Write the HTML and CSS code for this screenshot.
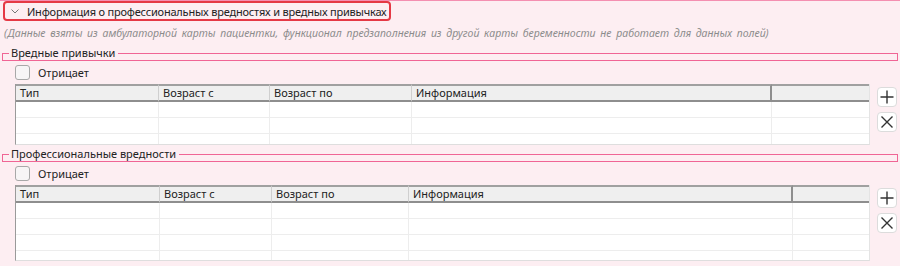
FILE: index.html
```html
<!DOCTYPE html>
<html lang="ru">
<head>
<meta charset="utf-8">
<link rel="stylesheet" href="styles.css">
</head>
<body>
<div class="panel">
  <div class="header">
    <svg class="chev" width="8" height="5" viewBox="0 0 8 5"><path d="M0.5 0.5 L4 4 L7.5 0.5" fill="none" stroke="#777" stroke-width="1"/></svg>
    <span class="title">Информация о профессиональных вредностях и вредных привычках</span>
  </div>
  <div class="note">(Данные взяты из амбулаторной карты пациентки, функционал предзаполнения из другой карты беременности не работает для данных полей)</div>

  <fieldset class="group first"><legend>Вредные привычки</legend></fieldset>
  <div class="group-body">
    <label class="check"><span class="box"></span><span>Отрицает</span></label>
    <div class="table-row">
      <table class="grid t1">
        <colgroup><col style="width:143px"><col style="width:111px"><col style="width:142px"><col style="width:360px"><col></colgroup>
        <thead><tr><th>Тип</th><th>Возраст с</th><th>Возраст по</th><th class="last-sep">Информация</th><th></th></tr></thead>
        <tbody>
          <tr><td></td><td></td><td></td><td></td><td></td></tr>
          <tr><td></td><td></td><td></td><td></td><td></td></tr>
          <tr class="cut"><td></td><td></td><td></td><td></td><td></td></tr>
        </tbody>
      </table>
      <div class="actions">
        <button class="btn"><svg width="14" height="14" viewBox="0 0 14 14"><path d="M7 0.5 V13.5 M0.5 7 H13.5" stroke="#333" stroke-width="1.4" fill="none"/></svg></button>
        <button class="btn"><svg width="14" height="14" viewBox="0 0 14 14"><path d="M1.5 1.5 L12.5 12.5 M12.5 1.5 L1.5 12.5" stroke="#333" stroke-width="1.4" fill="none"/></svg></button>
      </div>
    </div>
  </div>

  <fieldset class="group second"><legend>Профессиональные вредности</legend></fieldset>
  <div class="group-body">
    <label class="check"><span class="box"></span><span>Отрицает</span></label>
    <div class="table-row">
      <table class="grid t2">
        <colgroup><col style="width:144px"><col style="width:112px"><col style="width:137px"><col style="width:384px"><col></colgroup>
        <thead><tr><th>Тип</th><th>Возраст с</th><th>Возраст по</th><th class="last-sep">Информация</th><th></th></tr></thead>
        <tbody>
          <tr><td></td><td></td><td></td><td></td><td></td></tr>
          <tr><td></td><td></td><td></td><td></td><td></td></tr>
          <tr><td></td><td></td><td></td><td></td><td></td></tr>
          <tr class="cut short"><td></td><td></td><td></td><td></td><td></td></tr>
        </tbody>
      </table>
      <div class="actions">
        <button class="btn"><svg width="14" height="14" viewBox="0 0 14 14"><path d="M7 0.5 V13.5 M0.5 7 H13.5" stroke="#333" stroke-width="1.4" fill="none"/></svg></button>
        <button class="btn"><svg width="14" height="14" viewBox="0 0 14 14"><path d="M1.5 1.5 L12.5 12.5 M12.5 1.5 L1.5 12.5" stroke="#333" stroke-width="1.4" fill="none"/></svg></button>
      </div>
    </div>
  </div>
</div>
</body>
</html>
```

FILE: styles.css
```css
html, body {
  margin: 0;
  padding: 0;
  background: #fdeef2;
}
body {
  font-family: "Noto Sans", "Open Sans", sans-serif;
  font-size: 11px;
  color: #222;
  height: 266px;
  overflow: hidden;
}
.panel {
  border-top: 1px solid #f48fb1;
  padding: 0 2px;
}
.header {
  display: flex;
  align-items: center;
  box-sizing: border-box;
  height: 20px;
  width: 388px;
  border: 2px solid #e53945;
  border-radius: 4px;
  padding-left: 6px;
  margin-left: 1px;
  overflow: hidden;
}
.chev {
  flex-shrink: 0;
  margin-right: 8px;
  margin-top: 1px;
}
.title {
  white-space: nowrap;
  color: #222;
  font-size: 11px;
  letter-spacing: -0.2px;
}
.note {
  margin-top: 4px;
  margin-left: 2px;
  font-style: italic;
  font-size: 10.5px;
  color: #8c8c8c;
  word-spacing: 2px;
  white-space: nowrap;
  line-height: 16px;
}
.group {
  margin: 0;
  padding: 0;
  border: 1px solid #f06595;
  height: 0;
  min-width: 0;
}
.group.first {
  margin-top: 5px;
}
.group.second {
  margin-top: 2px;
}
.group legend {
  padding: 0 3px 0 2px;
  margin-left: 6px;
  line-height: 14px;
  font-size: 11px;
  color: #222;
}
.group-body {
  padding-left: 13px;
}
.check {
  display: flex;
  align-items: center;
  gap: 8px;
  height: 16px;
  margin-top: 3px;
}
.box {
  box-sizing: border-box;
  width: 15px;
  height: 15px;
  border: 1px solid #a8a8a8;
  border-radius: 3px;
  background: #f7f5f6;
}
.table-row {
  display: flex;
  align-items: flex-start;
  gap: 7px;
  margin-top: 4px;
}
.grid {
  border-collapse: separate;
  border-spacing: 0;
  table-layout: fixed;
  width: 855px;
  background: #fff;
  border-left: 1px solid #9a9a9a;
  border-right: 1px solid #e4e4e4;
  border-bottom: 1px solid #dedede;
}
.grid th {
  height: 14px;
  padding: 0 4px;
  text-align: left;
  font-weight: normal;
  background: #efefef;
  border-top: 2px solid #a0a0a0;
  border-bottom: 2px solid #8e8e8e;
  border-right: 1px solid #cfcfcf;
  line-height: 14px;
  white-space: nowrap;
  overflow: hidden;
}
.grid th:last-child {
  border-right: none;
}
.grid th.last-sep {
  border-right: 2px solid #8e8e8e;
}
.grid td {
  height: 15px;
  padding: 0;
  border-bottom: 1px solid #ededed;
  border-right: 1px solid #ededed;
}
.grid td:last-child {
  border-right: none;
}
.grid tr.cut td {
  height: 10px;
  border-bottom: none;
}
.grid tr.cut.short td {
  height: 9px;
}
.actions {
  display: flex;
  flex-direction: column;
  gap: 5px;
  margin-top: 3px;
}
.btn {
  box-sizing: border-box;
  width: 20px;
  height: 20px;
  padding: 0;
  border: 1px solid #dcdcdc;
  border-radius: 4px;
  background: #fff;
  display: flex;
  align-items: center;
  justify-content: center;
}
```
